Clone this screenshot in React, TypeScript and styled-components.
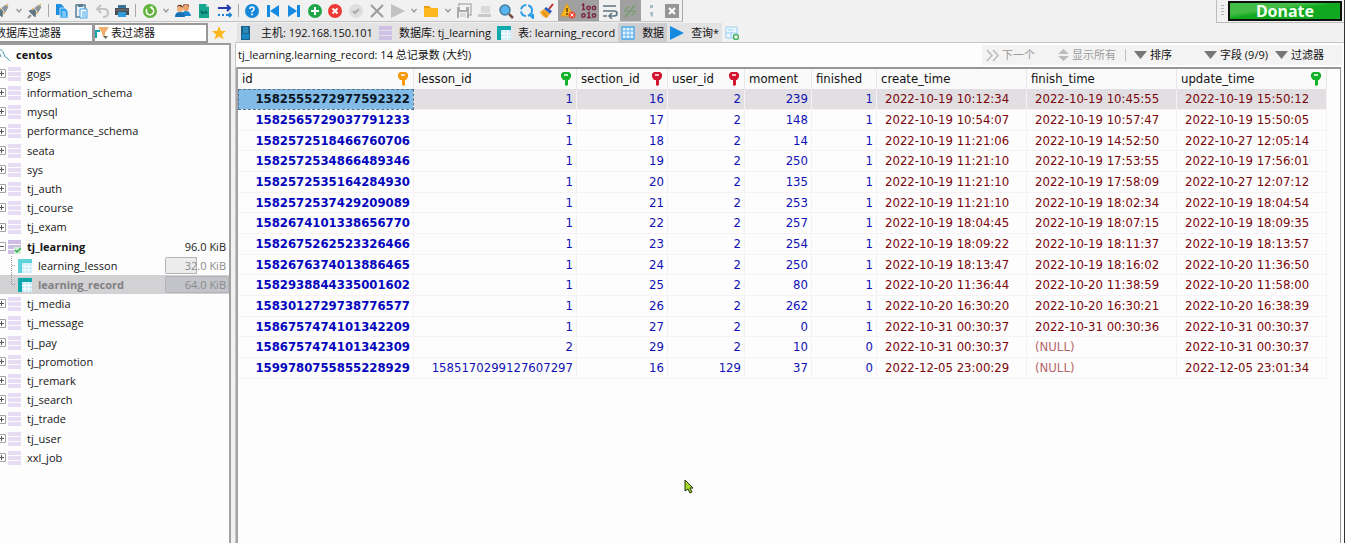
import React from "react";
import styled, { createGlobalStyle } from "styled-components";

const uiFont = `"Open Sans", "Noto Sans CJK SC", sans-serif`;
const gridFont = `"DejaVu Sans Condensed", "Noto Sans", sans-serif`;

const GlobalStyle = createGlobalStyle`
  * { box-sizing: border-box; }
  body { margin: 0; background: #fdfdfd; font: 11px/18px ${uiFont}; color: #111; }
  button, input { font: inherit; color: inherit; }
  svg { display: block; flex: none; }
`;

const Window = styled.div`
  position: relative;
  display: flex;
  flex-direction: column;
  min-height: 100vh;
  overflow: hidden;
  background: #f1f1f1;
  border-right: 1px solid #30323a;
`;

const TopBar = styled.header`
  display: flex;
  justify-content: space-between;
  height: 23px;
`;

const Toolbar = styled.div`
  display: flex;
  align-items: stretch;
  margin-left: -8px;
  height: 22px;
  border-right: 1px solid #a8a8a8;
  border-bottom: 1px solid #c4c4c4;
`;

const ToolGroup = styled.div<{ $width: number }>`
  display: flex;
  width: ${(p) => p.$width}px;
`;

const ToolButton = styled.button<{ $pressed?: boolean; $narrow?: boolean }>`
  flex: ${(p) => (p.$narrow ? "0 0 12px" : "1 1 0")};
  display: flex;
  align-items: center;
  justify-content: center;
  min-width: 0;
  padding: 0;
  border: 0;
  background: ${(p) => (p.$pressed ? "#a0a0a0" : "transparent")};
`;

const Separator = styled.span`
  width: 1px;
  margin: 4px 3px;
  background: #a9a9a9;
`;

const ActionSeparator = styled.span`
  width: 1px;
  height: 12px;
  margin: 0 8px 0 0;
  background: #bdbdbd;
`;

const DonateBar = styled.div`
  display: flex;
  align-items: center;
  gap: 4px;
  height: 23px;
  padding: 0 2px 0 4px;
  border-left: 1px solid #bcbcbc;
  border-bottom: 1px solid #bcbcbc;
`;

const Grip = styled.span`
  width: 3px;
  height: 12px;
  background: repeating-linear-gradient(#b5b5b5 0 1px, #f1f1f1 1px 3px);
`;

const DonateButton = styled.button`
  width: 114px;
  height: 20px;
  padding: 0;
  border: 2px solid #0b120b;
  background: linear-gradient(172deg, #43bd45 0 35%, #0fa81f 50% 100%);
  color: #f2fff0;
  font: bold 16px/16px "Noto Sans", sans-serif;
`;

const Main = styled.div`
  flex: 1;
  display: flex;
`;

const Sidebar = styled.aside`
  flex: none;
  display: flex;
  flex-direction: column;
  width: 255px;
  margin-left: -24px;
`;

const FilterRow = styled.div`
  display: flex;
  align-items: center;
  height: 20px;
  padding-left: 2px;
`;

const FilterBox = styled.label<{ $width: number }>`
  display: flex;
  align-items: center;
  gap: 2px;
  width: ${(p) => p.$width}px;
  height: 20px;
  border: 2px solid #989898;
  border-left-width: 1px;
  background: #fff;
`;

const FilterInput = styled.input`
  flex: 1;
  min-width: 0;
  height: 16px;
  padding: 0;
  border: 0;
  outline: 0;
  background: transparent;
  &::placeholder { color: #111; opacity: 1; }
`;

const StarButton = styled.button`
  margin-left: 4px;
  padding: 0;
  border: 0;
  background: none;
`;

const Tree = styled.ul`
  flex: 1;
  margin: 0;
  padding: 0 0 0 21px;
  list-style: none;
  background: #fdfdfd;
  border-top: 2px solid #9c9c9c;
  border-right: 2px solid #a2a2a2;
`;

const TreeRow = styled.li<{ $selected?: boolean; $bold?: boolean }>`
  display: flex;
  align-items: center;
  height: 19px;
  background: ${(p) => (p.$selected ? "#d2d1d3" : "transparent")};
  color: ${(p) => (p.$selected ? "#808083" : "#151515")};
  font-weight: ${(p) => (p.$bold ? 700 : 400)};
  &:nth-child(5n) { height: 20px; }
`;

const TreeIcon = styled.span<{ $child?: boolean; $root?: boolean }>`
  display: flex;
  align-items: center;
  gap: 2px;
  flex: 0 0 ${(p) => (p.$root ? 19 : p.$child ? 41 : 30)}px;
  padding-left: ${(p) => (p.$child ? 13 : 0)}px;
`;

const TreeLabel = styled.span`
  flex: 1;
`;

const SizeCell = styled.span<{ $bar?: number }>`
  width: 64px;
  height: 17px;
  padding-right: 3px;
  text-align: right;
  font-weight: 400;
  line-height: 17px;
  color: ${(p) => (p.$bar ? "#8b8b8b" : "#222")};
  border-radius: 2px;
  background: ${(p) =>
    p.$bar
      ? `linear-gradient(${p.$bar > 50 ? "#c2c4c9, #c2c4c9" : "#ececec, #ececec"}) 1px 1px / calc(${p.$bar}% - 2px) 15px no-repeat,
         linear-gradient(#b4b4b6, #b4b4b6) 0 0 / ${p.$bar}% 100% no-repeat`
      : "none"};
`;

const Content = styled.main`
  flex: 1;
  min-width: 0;
  display: flex;
  flex-direction: column;
  padding-left: 4px;
`;

const TabStrip = styled.nav`
  display: flex;
  height: 19px;
  padding-left: 2px;
`;

const Tab = styled.button<{ $active?: boolean; $plain?: boolean }>`
  display: flex;
  align-items: center;
  gap: 7px;
  padding: 0 3px;
  border: 0;
  white-space: nowrap;
  line-height: 18px;
  background: ${(p) => (p.$plain ? "transparent" : p.$active ? "#cecdcf" : "#e4e3e4")};
`;

const Panel = styled.section`
  flex: 1;
  display: flex;
  flex-direction: column;
  background: #fdfdfd;
  border-top: 1px solid #c6c6c6;
  border-left: 1px solid #c6c6c6;
`;

const InfoRow = styled.div`
  display: flex;
  justify-content: space-between;
  align-items: center;
  height: 24px;
  padding: 0 2px;
`;

const Actions = styled.div`
  display: flex;
  align-items: center;
  height: 20px;
  width: 360px;
  padding: 0 14px 0 4px;
  background: #f3f3f3;
`;

const Action = styled.button<{ $muted?: boolean; $gapAfter?: number }>`
  display: flex;
  align-items: center;
  gap: 3px;
  margin-right: ${(p) => p.$gapAfter ?? 0}px;
  padding: 0;
  border: 0;
  background: none;
  white-space: nowrap;
  color: ${(p) => (p.$muted ? "#9a9a9a" : "#111")};
`;

const GridFrame = styled.div`
  flex: 1;
  margin-right: 3px;
  border: 2px solid #97979b;
  border-width: 2px 1px 0 2px;
  border-left-color: #a5a2a8;
`;

const Table = styled.table`
  width: 1089px;
  table-layout: fixed;
  border-collapse: separate;
  border-spacing: 0;
  font: 13px/18px ${gridFont};
`;

const HeadCell = styled.th`
  height: 20px;
  padding: 0 4px;
  border-right: 1px solid #e8e8ea;
  background: #fafafa;
  font-weight: 400;
  text-align: left;
`;

const HeadInner = styled.span`
  display: flex;
  align-items: center;
  justify-content: space-between;
  height: 20px;
`;

const Row = styled.tr<{ $selected?: boolean }>`
  height: 21px;
  background: ${(p) => (p.$selected ? "#e1dfe1" : "transparent")};
  &:nth-child(3n) { height: 20px; }
`;

const Cell = styled.td<{ $kind: "id" | "num" | "date" | "null"; $focused?: boolean }>`
  padding: ${(p) => (p.$kind === "id" || p.$kind === "num" ? "0 3px 0 0" : "0 0 0 8px")};
  border-right: 1px solid #f5f1f5;
  border-bottom: 1px solid #f5f1f5;
  text-align: ${(p) => (p.$kind === "id" || p.$kind === "num" ? "right" : "left")};
  font-weight: ${(p) => (p.$kind === "id" ? 700 : 400)};
  color: ${(p) =>
    p.$focused
      ? "#0b1524"
      : p.$kind === "null"
        ? "#b56569"
        : p.$kind === "date"
          ? "#7a050a"
          : p.$kind === "id"
            ? "#0505bd"
            : "#1010b4"};
  background: ${(p) => (p.$focused ? "#82bce6" : "transparent")};
  outline: ${(p) => (p.$focused ? "1px dashed #4f7590" : "none")};
  outline-offset: -1px;
  white-space: nowrap;
`;

const Pointer = styled.svg`
  position: absolute;
  left: 684px;
  top: 479px;
`;

const Svg = ({ children, w = 16, h = 16 }: { children: React.ReactNode; w?: number; h?: number }) => (
  <svg width={w} height={h} viewBox={`0 0 ${w} ${h}`} fill="none" aria-hidden="true">{children}</svg>
);

const Plug = () => (
  <Svg>
    <path d="M1 15l3-3" stroke="#8a9297" strokeWidth="2" />
    <path d="M2 8l6 6 1-5-2-3z" fill="#5d7784" stroke="#69808c" />
    <path d="M8 5l4-3 2 2-3 5z" fill="#8a969c" stroke="#8a969c" />
    <path d="M12 3l2-2M9 11l2-2M5 7l2-2" stroke="#d8b36a" strokeWidth="1.5" />
  </Svg>
);
const Chevron = () => <Svg w={8} h={6}><path d="M1.5 1l2.5 3L6.5 1" stroke="#9a9a9a" strokeWidth="1.4" /></Svg>;
const Copy = () => (
  <Svg>
    <path d="M2 1h5l3 3v8H2z" fill="#1c8de0" />
    <path d="M6 5h5l3 3v7H6z" fill="#2aa0f0" stroke="#dcefff" strokeWidth=".8" />
    <path d="M8 9h4M8 11h4M8 13h4" stroke="#cfe9ff" />
  </Svg>
);
const Paste = () => (
  <Svg>
    <path d="M2 2h9v12H2z" fill="#e9f1f6" stroke="#5a7d94" strokeWidth="1.5" />
    <path d="M4 1h5v3H4z" fill="#5a7d94" />
    <path d="M6 6h7v9H6z" fill="#fff" stroke="#3ba2e8" />
    <path d="M8 9h4M8 11h4M8 13h4" stroke="#3ba2e8" />
  </Svg>
);
const Undo = () => <Svg><path d="M7 2L3 6l4 4M3 6h7q4 0 4 4 0 4-5 4" stroke="#c3c3c3" strokeWidth="2" /></Svg>;
const Printer = () => (
  <Svg>
    <path d="M4 2h8v4H4z" fill="#35769d" /><path d="M1 5h14v7H1z" fill="#4a4f55" />
    <path d="M4 9h8v5H4z" fill="#2f9ade" /><path d="M2 7h12" stroke="#757b80" />
  </Svg>
);
const Refresh = () => (
  <Svg>
    <circle cx="8" cy="8" r="7" fill="#62b33c" />
    <path d="M5 6a3.700 3.700 0 1 0 5-1" stroke="#fff" strokeWidth="1.600" />
    <path d="M10.500 2.500v4L7.500 4.500z" fill="#fff" />
  </Svg>
);
const Users = () => (
  <Svg>
    <circle cx="11" cy="5" r="3" fill="#e9a06a" /><path d="M8 4q3-5 6 0v-2q-3-2-6 0z" fill="#8a3b1e" />
    <path d="M6 13q1-5 5-5t5 5z" fill="#1d86cf" />
    <circle cx="5" cy="6" r="3" fill="#eeb07c" /><path d="M2 5q1-4 6 0-1-4-4-3-2 0-2 3z" fill="#5d2a18" />
    <path d="M0 14q0-5 5-5t5 5z" fill="#176fb4" />
  </Svg>
);
const Csv = () => (
  <Svg><path d="M3 1h7l3 3v11H3z" fill="#18a690" /><path d="M10 1v3h3z" fill="#8fdccf" /><path d="M4.500 8.500q2-1 1.500 1t2 0 1.500-.5 2 .5" stroke="#0c6e60" strokeWidth="1.500" /></Svg>
);
const Arrows = () => (
  <Svg>
    <path d="M1 5h11M10 2l3 3-3 3" stroke="#2439ae" strokeWidth="2" />
    <path d="M1 12h2M5 12h2M9 12h5M12 10l2 2-2 2" stroke="#1c86d6" strokeWidth="2" />
  </Svg>
);
const Help = () => (
  <Svg>
    <circle cx="8" cy="8" r="7" fill="#1687d9" />
    <path d="M6 6q0-2 2-2t2 2q0 1-2 2.500v1" stroke="#fff" strokeWidth="1.500" /><circle cx="8" cy="11.500" r="1" fill="#fff" />
  </Svg>
);
const First = () => <Svg><path d="M2 2h3v12H2zM14 2v12L5 8z" fill="#148be0" /></Svg>;
const Last = () => <Svg><path d="M11 2h3v12h-3zM2 2v12l9-6z" fill="#148be0" /></Svg>;
const Round = ({ fill, d, stroke = "#fff" }: { fill: string; d: string; stroke?: string }) => (
  <Svg><circle cx="8" cy="8" r="7" fill={fill} /><path d={d} stroke={stroke} strokeWidth="2" /></Svg>
);
const Cross = () => <Svg><path d="M2 2l12 12M14 2L2 14" stroke="#9b9b9b" strokeWidth="2" /></Svg>;
const Play = ({ color }: { color: string }) => <Svg w={14} h={14}><path d="M0 0v14l14-7z" fill={color} /></Svg>;
const Folder = () => <Svg><path d="M1 3h5l2 2h7v9H1z" fill="#fdb71f" /><path d="M1 3h5l2 2H1z" fill="#ee9d0c" /></Svg>;
const Save = () => (
  <Svg>
    <path d="M3 3V1h12v11h-2" stroke="#b4b4b4" strokeWidth="1.500" />
    <path d="M1 4h12v11H1z" fill="#ababab" /><path d="M4 4h6v3H4zM3 9h8v6H3z" fill="#f2f2f2" /><path d="M4 11h6M4 13h6" stroke="#c4c4c4" />
  </Svg>
);
const Device = () => <Svg><path d="M4 3h9v7H4z" fill="#dadada" /><path d="M1 11h13v3H1z" fill="#c8c8c8" /></Svg>;
const Search = () => (
  <Svg><circle cx="7" cy="7" r="5" fill="#56b4ee" stroke="#477b9c" strokeWidth="1.500" /><path d="M11 11l4 4" stroke="#755147" strokeWidth="2.500" /></Svg>
);
const SearchLoop = () => (
  <Svg><circle cx="7.500" cy="7.500" r="5.500" stroke="#2c9de8" strokeWidth="2" strokeDasharray="7 2" /><path d="M10 11l4 4v-4" stroke="#2c9de8" strokeWidth="2" /></Svg>
);
const Broom = () => (
  <Svg>
    <path d="M10 6l4-5" stroke="#c02a2a" strokeWidth="2" />
    <path d="M7 4l6 4-2 3-6-5z" fill="#2f5fc4" /><path d="M5 6l6 5-3 4q-5-1-7-6z" fill="#f5a623" /><path d="M4 9l4 5" stroke="#d97b1c" />
  </Svg>
);
const Warning = () => (
  <Svg>
    <path d="M7 1l6 12H1z" fill="#fdbb1d" stroke="#e79a13" /><path d="M7 5v4M7 10v2" stroke="#553a12" strokeWidth="1.500" />
    <circle cx="12" cy="12" r="3.500" fill="#ee4b36" /><path d="M10.500 10.500l3 3M13.500 10.500l-3 3" stroke="#fff" />
  </Svg>
);
const Binary = () => (
  <Svg>
    <g stroke="#7c2748" strokeWidth="1.500">
      <path d="M1 2.500L2.500 1v6M1 6.500h3" />
      <circle cx="7.500" cy="5" r="1.700" /><circle cx="13" cy="5" r="1.700" />
      <circle cx="2.500" cy="12.500" r="1.700" /><path d="M6.500 10.500L8 9.500V15M6 14.500h4" /><circle cx="13" cy="12.500" r="1.700" />
    </g>
  </Svg>
);
const Wrap = () => <Svg><path d="M1 3h13M1 8h11q3 0 3 2.500T12 13H8M10 10l-3 3 3 3M1 13h4" stroke="#5f7684" strokeWidth="1.600" /></Svg>;
const Link = () => <Svg><path d="M3 9q0-4 4-5M13 7q0 4-4 5M3 14L13 2" stroke="#6fa05c" strokeWidth="1.200" /><path d="M4 8h8" stroke="#7f8f86" /></Svg>;
const Semi = () => <Svg><path d="M7 2h3v3H7zM7 9h3v3q0 2-2 2z" fill="#a9b9c1" /></Svg>;
const CloseBox = () => <Svg><path d="M1 1h14v14H1z" fill="#969696" /><path d="M5 5l6 6M11 5l-6 6" stroke="#fff" strokeWidth="2" /></Svg>;

const Server = () => (
  <Svg w={14} h={14}><path d="M1 0h9v14H1z" fill="#1c5f88" /><path d="M3 2h5M3 4h5M3 6h5" stroke="#35b6ea" /><path d="M2 8h7v5H2z" fill="#1687c3" /></Svg>
);
const Database = ({ color = "#e6dcf3", checked = false }: { color?: string; checked?: boolean }) => (
  <Svg w={13} h={14}>
    <path d="M0 0h13v4H0zM0 5h13v4H0zM0 10h13v4H0z" fill={color} />
    {checked && <><path d="M6 7h7v7H6z" fill="#cfeed4" /><path d="M7 10l2 2 4-4" stroke="#37a852" strokeWidth="1.500" /></>}
  </Svg>
);
const TableIcon = ({ head = "#11a9ac" }: { head?: string }) => (
  <Svg w={14} h={14}>
    <path d="M4 4h10v10H4z" fill="#c9ecfa" /><path d="M7 4v10M10.500 4v10M4 7.500h10M4 11h10" stroke="#fff" />
    <path d="M0 0h14v4H4v10H0z" fill={head} />
  </Svg>
);
const GridIcon = () => (
  <Svg w={14} h={14}><path d="M1 1h12v12H1z" fill="#e2f3ff" stroke="#4aa7e8" strokeWidth="1.300" /><path d="M5 1v12M9 1v12M1 5h12M1 9h12" stroke="#63b4ec" /></Svg>
);
const NewQuery = () => (
  <Svg w={14} h={14}>
    <path d="M1 1h11v11H1z" fill="#eaf6ff" stroke="#9bcff2" /><path d="M3 4h5M6 6v6M1 7h11" stroke="#9bcff2" />
    <circle cx="11" cy="11" r="2.500" fill="#fff" stroke="#44b35a" strokeWidth="1.500" />
  </Svg>
);
const Funnel = () => (
  <Svg w={14} h={14}><path d="M3 1h11l-4 6v4l-3-2V7z" fill="#f2b06c" /><path d="M0 4h5v2H2v6H0z" fill="#15a5ad" /><path d="M8 10h5l-2.500 3z" fill="#666" /></Svg>
);
const Star = () => <Svg w={14} h={14}><path d="M7 0l2 5h5l-4 3.500 1.500 5L7 10.500l-4.500 3L4 8.500 0 5h5z" fill="#fdb71c" /></Svg>;
const Dolphin = () => <Svg w={13} h={14}><path d="M0 2q5-2 7 4 1 4 3 4l3 3M0 8l3 3M2 4l2 5" stroke="#3d9bb0" /></Svg>;
const Key = ({ color }: { color: string }) => (
  <Svg w={12} h={14}><path d="M3 0h6l2 2v3L9 8H8v5l-2 1-1-1V8H3L1 5V2z" fill={color} /><path d="M4 3h4" stroke="#fff" strokeWidth="1.500" /></Svg>
);
const Expander = ({ open = false }: { open?: boolean }) => (
  <Svg w={9} h={9}><path d="M.5.5h8v8h-8z" fill="#fff" stroke="#a4a4a4" /><path d={open ? "M2 4.500h5" : "M2 4.500h5M4.500 2v5"} stroke="#555" /></Svg>
);
const Down = () => <Svg w={13} h={9}><path d="M0 0h13L6.500 8z" fill="#777" /></Svg>;
const UpDown = () => <Svg w={11} h={12}><path d="M0 5h11L5.500 0zM0 7h11l-5.500 5z" fill="#bcbcbc" /></Svg>;
const DoubleRight = () => <Svg w={13} h={13}><path d="M1 1l5 5.500L1 12M7 1l5 5.500L7 12" stroke="#bbb" strokeWidth="1.500" /></Svg>;

const databasesBefore = ["gogs", "information_schema", "mysql", "performance_schema", "seata", "sys", "tj_auth", "tj_course", "tj_exam"];
const databasesAfter = ["tj_media", "tj_message", "tj_pay", "tj_promotion", "tj_remark", "tj_search", "tj_trade", "tj_user", "xxl_job"];

const columns: { name: string; width: number; keyColor?: string }[] = [
  { name: "id", width: 176, keyColor: "#f79a0c" },
  { name: "lesson_id", width: 163, keyColor: "#14b32a" },
  { name: "section_id", width: 91, keyColor: "#d4152f" },
  { name: "user_id", width: 77, keyColor: "#d4152f" },
  { name: "moment", width: 67 },
  { name: "finished", width: 65 },
  { name: "create_time", width: 150 },
  { name: "finish_time", width: 150 },
  { name: "update_time", width: 150, keyColor: "#14b32a" },
];

const records: string[][] = [
  ["1582555272977592322", "1", "16", "2", "239", "1", "2022-10-19 10:12:34", "2022-10-19 10:45:55", "2022-10-19 15:50:12"],
  ["1582565729037791233", "1", "17", "2", "148", "1", "2022-10-19 10:54:07", "2022-10-19 10:57:47", "2022-10-19 15:50:05"],
  ["1582572518466760706", "1", "18", "2", "14", "1", "2022-10-19 11:21:06", "2022-10-19 14:52:50", "2022-10-27 12:05:14"],
  ["1582572534866489346", "1", "19", "2", "250", "1", "2022-10-19 11:21:10", "2022-10-19 17:53:55", "2022-10-19 17:56:01"],
  ["1582572535164284930", "1", "20", "2", "135", "1", "2022-10-19 11:21:10", "2022-10-19 17:58:09", "2022-10-27 12:07:12"],
  ["1582572537429209089", "1", "21", "2", "253", "1", "2022-10-19 11:21:10", "2022-10-19 18:02:34", "2022-10-19 18:04:54"],
  ["1582674101338656770", "1", "22", "2", "257", "1", "2022-10-19 18:04:45", "2022-10-19 18:07:15", "2022-10-19 18:09:35"],
  ["1582675262523326466", "1", "23", "2", "254", "1", "2022-10-19 18:09:22", "2022-10-19 18:11:37", "2022-10-19 18:13:57"],
  ["1582676374013886465", "1", "24", "2", "250", "1", "2022-10-19 18:13:47", "2022-10-19 18:16:02", "2022-10-20 11:36:50"],
  ["1582938844335001602", "1", "25", "2", "80", "1", "2022-10-20 11:36:44", "2022-10-20 11:38:59", "2022-10-20 11:58:00"],
  ["1583012729738776577", "1", "26", "2", "262", "1", "2022-10-20 16:30:20", "2022-10-20 16:30:21", "2022-10-20 16:38:39"],
  ["1586757474101342209", "1", "27", "2", "0", "1", "2022-10-31 00:30:37", "2022-10-31 00:30:36", "2022-10-31 00:30:37"],
  ["1586757474101342309", "2", "29", "2", "10", "0", "2022-10-31 00:30:37", "(NULL)", "2022-10-31 00:30:37"],
  ["1599780755855228929", "1585170299127607297", "16", "129", "37", "0", "2022-12-05 23:00:29", "(NULL)", "2022-12-05 23:01:34"],
];

const cellKind = (value: string, column: number) =>
  column === 0 ? "id" : value === "(NULL)" ? "null" : column > 5 ? "date" : "num";

const Tool = ({ label, pressed, narrow, children }: { label: string; pressed?: boolean; narrow?: boolean; children: React.ReactNode }) => (
  <ToolButton type="button" aria-label={label} $pressed={pressed} $narrow={narrow}>{children}</ToolButton>
);

const DatabaseRow = ({ name }: { name: string }) => (
  <TreeRow>
    <TreeIcon><Expander /><Database /></TreeIcon>
    <TreeLabel>{name}</TreeLabel>
  </TreeRow>
);

export default function App() {
  return (
    <Window>
      <GlobalStyle />
      <TopBar>
        <Toolbar>
          <ToolGroup $width={53}>
            <Tool label="连接"><Plug /></Tool>
            <Tool label="连接选项" narrow><Chevron /></Tool>
            <Tool label="断开"><Plug /></Tool>
          </ToolGroup>
          <Separator />
          <ToolGroup $width={80}>
            <Tool label="复制"><Copy /></Tool>
            <Tool label="粘贴"><Paste /></Tool>
            <Tool label="撤销"><Undo /></Tool>
            <Tool label="打印"><Printer /></Tool>
          </ToolGroup>
          <Separator />
          <ToolGroup $width={96}>
            <Tool label="刷新"><Refresh /></Tool>
            <Tool label="刷新选项" narrow><Chevron /></Tool>
            <Tool label="用户"><Users /></Tool>
            <Tool label="导出"><Csv /></Tool>
            <Tool label="传输"><Arrows /></Tool>
          </ToolGroup>
          <Separator />
          <ToolGroup $width={166}>
            <Tool label="帮助"><Help /></Tool>
            <Tool label="首条"><First /></Tool>
            <Tool label="末条"><Last /></Tool>
            <Tool label="插入"><Round fill="#1fa54a" d="M8 4v8M4 8h8" /></Tool>
            <Tool label="删除"><Round fill="#ee3a35" d="M5.500 5.500l5 5M10.500 5.500l-5 5" /></Tool>
            <Tool label="提交"><Round fill="#dedede" stroke="#aaa" d="M5 8l2 2 4-4" /></Tool>
            <Tool label="取消"><Cross /></Tool>
            <Tool label="运行"><Play color="#c2c2c2" /></Tool>
          </ToolGroup>
          <ToolGroup $width={46}>
            <Tool label="运行选项" narrow><Chevron /></Tool>
            <Tool label="打开"><Folder /></Tool>
            <Tool label="最近文件" narrow><Chevron /></Tool>
          </ToolGroup>
          <ToolGroup $width={228}>
            <Tool label="保存"><Save /></Tool>
            <Tool label="另存"><Device /></Tool>
            <Tool label="查找"><Search /></Tool>
            <Tool label="替换"><SearchLoop /></Tool>
            <Tool label="清理"><Broom /></Tool>
            <Tool label="出错停止" pressed><Warning /></Tool>
            <Tool label="二进制" pressed><Binary /></Tool>
            <Tool label="换行"><Wrap /></Tool>
            <Tool label="参数" pressed><Link /></Tool>
            <Tool label="分隔符"><Semi /></Tool>
            <Tool label="关闭"><CloseBox /></Tool>
          </ToolGroup>
        </Toolbar>
        <DonateBar>
          <Grip />
          <DonateButton type="button">Donate</DonateButton>
        </DonateBar>
      </TopBar>

      <Main>
        <Sidebar>
          <FilterRow>
            <FilterBox $width={116}><Funnel /><FilterInput aria-label="数据库过滤器" placeholder="数据库过滤器" /></FilterBox>
            <FilterBox $width={114}><Funnel /><FilterInput aria-label="表过滤器" placeholder="表过滤器" /></FilterBox>
            <StarButton type="button" aria-label="收藏"><Star /></StarButton>
          </FilterRow>
          <Tree>
            <TreeRow $bold>
              <TreeIcon $root><Dolphin /></TreeIcon>
              <TreeLabel>centos</TreeLabel>
            </TreeRow>
            {databasesBefore.map((name) => <DatabaseRow key={name} name={name} />)}
            <TreeRow $bold>
              <TreeIcon><Expander open /><Database color="#cdbde4" checked /></TreeIcon>
              <TreeLabel>tj_learning</TreeLabel>
              <SizeCell>96.0 KiB</SizeCell>
            </TreeRow>
            <TreeRow>
              <TreeIcon $child><Svg w={6} h={19}><path d="M1.500 0v19M2 9.500h4" stroke="#999" strokeDasharray="1 1" /></Svg><TableIcon head="#5fd3da" /></TreeIcon>
              <TreeLabel>learning_lesson</TreeLabel>
              <SizeCell $bar={50}>32.0 KiB</SizeCell>
            </TreeRow>
            <TreeRow $bold $selected>
              <TreeIcon $child><Svg w={6} h={19}><path d="M1.500 0v10M2 9.500h4" stroke="#999" strokeDasharray="1 1" /></Svg><TableIcon /></TreeIcon>
              <TreeLabel>learning_record</TreeLabel>
              <SizeCell $bar={100}>64.0 KiB</SizeCell>
            </TreeRow>
            {databasesAfter.map((name) => <DatabaseRow key={name} name={name} />)}
          </Tree>
        </Sidebar>

        <Content>
          <TabStrip>
            <Tab type="button"><Server />主机: 192.168.150.101</Tab>
            <Tab type="button"><Database color="#cfc0e6" />数据库: tj_learning</Tab>
            <Tab type="button"><TableIcon />表: learning_record</Tab>
            <Tab type="button" $active><GridIcon />数据</Tab>
            <Tab type="button"><Play color="#148be0" />查询*</Tab>
            <Tab type="button" $plain aria-label="新建查询"><NewQuery /></Tab>
          </TabStrip>
          <Panel>
            <InfoRow>
              <span>tj_learning.learning_record: 14 总记录数 (大约)</span>
              <Actions>
                <Action type="button" $muted $gapAfter={23}><DoubleRight />下一个</Action>
                <Action type="button" $muted $gapAfter={9}><UpDown />显示所有</Action>
                <ActionSeparator />
                <Action type="button" $gapAfter={32}><Down />排序</Action>
                <Action type="button" $gapAfter={7}><Down />字段 (9/9)</Action>
                <Action type="button"><Down />过滤器</Action>
              </Actions>
            </InfoRow>
            <GridFrame>
              <Table>
                <colgroup>
                  {columns.map((c) => <col key={c.name} width={c.width} />)}
                </colgroup>
                <thead>
                  <tr>
                    {columns.map((c) => (
                      <HeadCell key={c.name} scope="col">
                        <HeadInner>{c.name}{c.keyColor && <Key color={c.keyColor} />}</HeadInner>
                      </HeadCell>
                    ))}
                  </tr>
                </thead>
                <tbody>
                  {records.map((record, r) => (
                    <Row key={record[0]} $selected={r === 0}>
                      {record.map((value, c) => (
                        <Cell key={c} $kind={cellKind(value, c)} $focused={r === 0 && c === 0}>{value}</Cell>
                      ))}
                    </Row>
                  ))}
                </tbody>
              </Table>
            </GridFrame>
          </Panel>
        </Content>
      </Main>
      <Pointer width="11" height="15" viewBox="0 0 11 15" aria-hidden="true">
        <path d="M1 1v11l3-2 2 4 2-1-2-4h3z" fill="#a6d82c" stroke="#26330f" />
      </Pointer>
    </Window>
  );
}
